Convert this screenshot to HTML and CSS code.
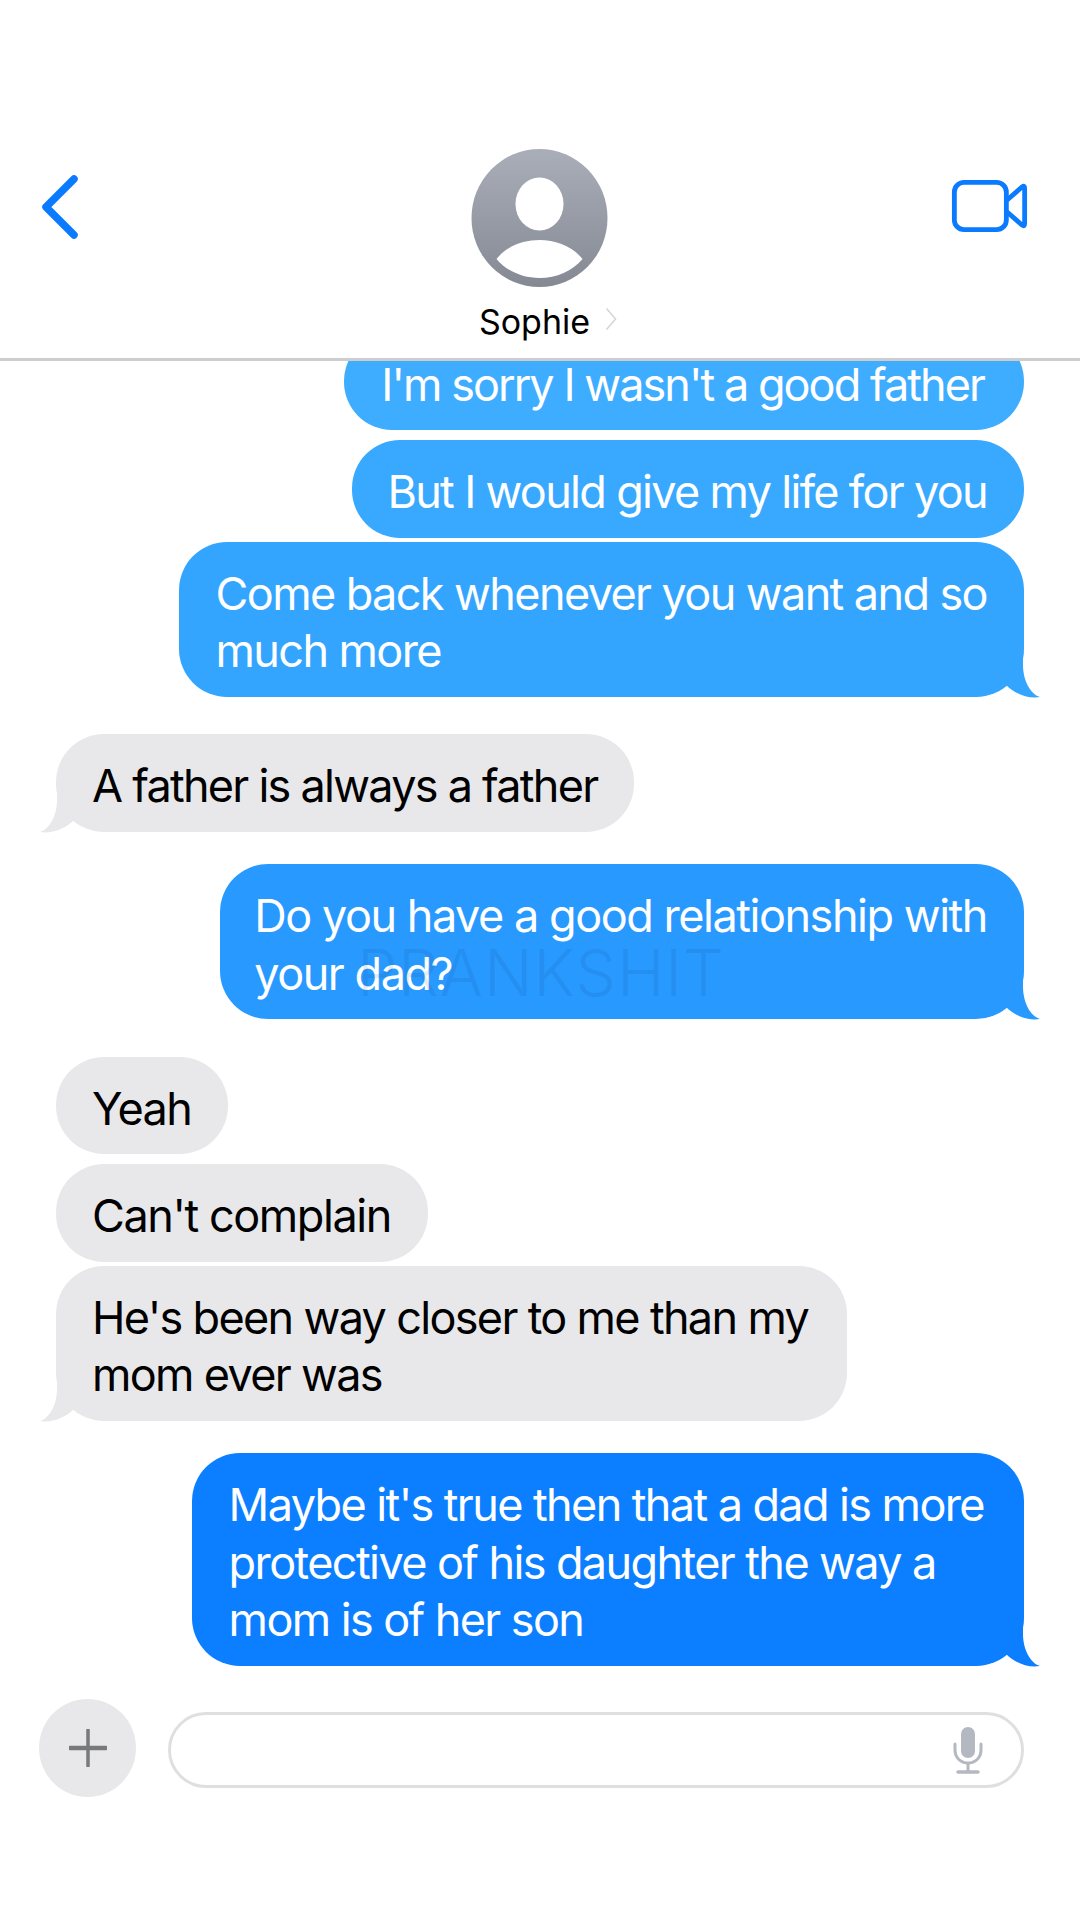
FILE: index.html
```html
<!DOCTYPE html>
<html lang="en">
<head>
<meta charset="utf-8">
<title>Sophie</title>
<link rel="stylesheet" href="styles.css">
</head>
<body>
<div class="page">
  <header class="header">
    <svg class="back" viewBox="0 0 40 66" width="40" height="66"><path d="M34 5 L6 33 L34 61" fill="none" stroke="#0a7aff" stroke-width="7.500" stroke-linecap="round" stroke-linejoin="round"/></svg>
    <div class="contact">
      <svg class="avatar" viewBox="0 0 136 138" width="137" height="138">
        <defs><linearGradient id="ag" x1="0" y1="0" x2="0" y2="1"><stop offset="0" stop-color="#a9aeb9"/><stop offset="1" stop-color="#858993"/></linearGradient></defs>
        <ellipse cx="68" cy="69" rx="68" ry="69" fill="url(#ag)"/>
        <ellipse cx="68" cy="55" rx="24" ry="26.500" fill="#fff"/>
        <path d="M25 110 C35 97 52 91 68 91 C84 91 101 97 111 110 C101 122 85 129 68 129 C51 129 35 122 25 110Z" fill="#fff"/>
      </svg>
      <div class="name-row">
        <span class="name">Sophie</span>
        <svg class="name-chev" viewBox="0 0 12 24" width="12" height="24"><path d="M1.500 1.500 L10.500 12 L1.500 22.500" fill="none" stroke="#d6d6d8" stroke-width="1.600"/></svg>
      </div>
    </div>
    <svg class="video" viewBox="0 0 78 54" width="77" height="52"><rect x="2.500" y="2.500" width="54" height="49" rx="10" fill="none" stroke="#0a7aff" stroke-width="5"/><path d="M57 21 L73 7 Q75.500 5.500 75.500 9 L75.500 45 Q75.500 48.500 73 47 L57 33" fill="none" stroke="#0a7aff" stroke-width="5" stroke-linejoin="round"/></svg>
  </header>

  <main class="thread">
    <div class="bubble out c1 first">I'm sorry I wasn't a good father</div>
    <div class="bubble out c2 gap-m">But I would give my life for you</div>
    <div class="bubble out c3 gap-xs tailed">Come back whenever you want and so<br>much more<svg class="tail tail-r" viewBox="0 0 40 48" width="40" height="48"><path d="M24 0 L24 15 C24 30 31 44 41 47 C29 49 16 44 7 35 L0 20 Z"/></svg></div>
    <div class="bubble in track-tight gap-l tailed">A father is always a father<svg class="tail tail-l" viewBox="0 0 40 48" width="40" height="48"><path d="M24 0 L24 15 C24 30 31 44 41 47 C29 49 16 44 7 35 L0 20 Z"/></svg></div>
    <div class="bubble out c4 gap-k tailed">Do you have a good relationship with<br>your dad?<svg class="tail tail-r" viewBox="0 0 40 48" width="40" height="48"><path d="M24 0 L24 15 C24 30 31 44 41 47 C29 49 16 44 7 35 L0 20 Z"/></svg></div>
    <div class="bubble in gap-l">Yeah</div>
    <div class="bubble in track-loose gap-m">Can't complain</div>
    <div class="bubble in track-mid gap-xs tailed">He's been way closer to me than my<br>mom ever was<svg class="tail tail-l" viewBox="0 0 40 48" width="40" height="48"><path d="M24 0 L24 15 C24 30 31 44 41 47 C29 49 16 44 7 35 L0 20 Z"/></svg></div>
    <div class="bubble out c5 gap-k tailed">Maybe it's true then that a dad is more<br>protective of his daughter the way a<br>mom is of her son<svg class="tail tail-r" viewBox="0 0 40 48" width="40" height="48"><path d="M24 0 L24 15 C24 30 31 44 41 47 C29 49 16 44 7 35 L0 20 Z"/></svg></div>
  </main>

  <footer class="composer">
    <div class="plus">
      <svg viewBox="0 0 38 38" width="38" height="38"><path d="M19 1 V37" stroke="#78797d" stroke-width="3.500" stroke-linecap="round"/><path d="M1 19 H37" stroke="#78797d" stroke-width="4.500" stroke-linecap="round"/></svg>
    </div>
    <div class="field">
      <svg viewBox="0 0 32 48" width="32" height="48"><rect x="9" y="1" width="14" height="31" rx="7" fill="#b3b8c1"/><path d="M3 18 V24 C3 32 9 37 16 37 C23 37 29 32 29 24 V18" fill="none" stroke="#b3b8c1" stroke-width="3" stroke-linecap="round"/><path d="M16 37 V45" stroke="#b3b8c1" stroke-width="3"/><path d="M6 46 H26" stroke="#b3b8c1" stroke-width="3.500" stroke-linecap="round"/></svg>
    </div>
  </footer>

  <div class="watermark">PRANKSHIT</div>
</div>
</body>
</html>
```

FILE: styles.css
```css
* { box-sizing: border-box; }
html, body { margin: 0; padding: 0; background: #fff; }
.page {
  position: relative;
  width: 1080px;
  height: 1920px;
  overflow: hidden;
  font-family: Inter, "Liberation Sans", sans-serif;
  background: #fff;
}
.header {
  height: 361px;
  border-bottom: 3px solid #cdcdcf;
  padding: 0 52px 0 40px;
  display: grid;
  grid-template-columns: 1fr 137px 1fr;
  align-items: start;
}
.back { margin-top: 174px; }
.video { justify-self: end; margin-top: 180px; }
.contact {
  margin-top: 149px;
  margin-left: 5px;
  width: 137px;
  display: flex;
  flex-direction: column;
  align-items: center;
}
.avatar { display: block; flex: none; }
.name-row {
  margin-top: 13px;
  display: flex;
  align-items: center;
  gap: 15px;
  height: 44px;
  padding-left: 18px;
  white-space: nowrap;
}
.name { font-size: 34px; line-height: 44px; color: #000; }
.name-chev { display: block; margin-top: -6px; }
.thread {
  height: 1338px;
  overflow: hidden;
  padding: 0 56px;
  display: flex;
  flex-direction: column;
  position: relative;
}
.bubble {
  position: relative;
  flex: none;
  padding: 23px 37px 17px;
  border-radius: 48px;
  font-size: 45px;
  line-height: 57.500px;
  letter-spacing: -1.600px;
  white-space: nowrap;
}
.first { margin-top: -28.500px; }
.gap-xs { margin-top: 4px; }
.gap-m { margin-top: 10px; }
.gap-l { margin-top: 37.500px; }
.gap-k { margin-top: 32.500px; }
.out { align-self: flex-end; color: #fff; }
.in { align-self: flex-start; background: #e8e8ea; color: #000; padding-left: 36px; }
.track-tight { letter-spacing: -1.740px; }
.track-mid { letter-spacing: -1.670px; padding-right: 39px; }
.track-loose { letter-spacing: -1.430px; }
.c1 { background: #3fadff; letter-spacing: -1.950px; padding-right: 40px; }
.c2 { background: #39a9ff; letter-spacing: -1.680px; padding-left: 35px; }
.c3 { background: #33a5ff; }
.c4 { background: #2899ff; letter-spacing: -1.460px; padding-left: 34px; }
.c5 { background: #0b7fff; padding-right: 40px; }
.tail { position: absolute; bottom: -1px; overflow: visible; }
.tail-r { right: -15px; }
.tail-l { left: -15px; transform: scaleX(-1); }
.c3 .tail { fill: #33a5ff; }
.c4 .tail { fill: #2899ff; }
.c5 .tail { fill: #0b7fff; }
.in .tail { fill: #e8e8ea; }
.composer {
  padding-left: 39px;
  display: flex;
  align-items: center;
  gap: 32px;
}
.plus {
  width: 97px;
  height: 98px;
  border-radius: 50%;
  background: #e8e8ea;
  display: flex;
  align-items: center;
  justify-content: center;
}
.field {
  width: 856px;
  height: 76px;
  margin-top: 4px;
  border: 3px solid #dfdfe0;
  border-radius: 38px;
  display: flex;
  align-items: center;
  justify-content: flex-end;
  padding-right: 37px;
}
.watermark {
  position: absolute;
  left: 357px;
  top: 936px;
  font-size: 64px;
  line-height: 74px;
  letter-spacing: 1px;
  font-weight: 300;
  color: rgba(0, 40, 90, 0.09);
  white-space: nowrap;
  pointer-events: none;
}
```
